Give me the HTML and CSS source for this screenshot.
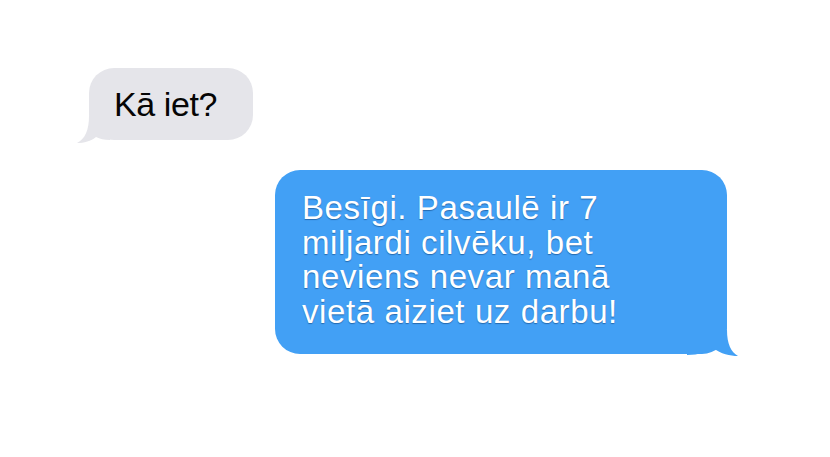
FILE: index.html
```html
<!DOCTYPE html>
<html lang="lv">
<head>
    <meta charset="UTF-8">
    <meta name="viewport" content="width=device-width, initial-scale=1.0">
    <title>Sarakste</title>
    <link rel="stylesheet" href="styles.css">
</head>
<body>
    <!-- sarakste -->
    <div class="chat">
        <!-- ienākošā ziņa -->
        <div class="bubble in">
            Kā iet?
            <svg class="tail tail-in" width="40" height="40" viewBox="0 0 40 40">
                <path d="M19 6 C19 20 15 29 7 33 C14 33 21 31 26 27 C30 29 34 30 40 30 L40 6 Z" fill="#e5e5ea"/>
            </svg>
        </div>

        <!-- izejošā ziņa -->
        <div class="bubble out">
            Besīgi. Pasaulē ir 7<br>
            miljardi cilvēku, bet<br>
            neviens nevar manā<br>
            vietā aiziet uz darbu!
            <svg class="tail tail-out" width="70" height="40" viewBox="0 0 70 40">
                <path d="M12 34 L12 10 L52 10 C52 24 56 32 63 36 C55 36 46 34 38 28 C32 32 24 35 12 35 Z" fill="#42a0f5"/>
            </svg>
        </div>
    </div>
</body>
</html>
```

FILE: styles.css
```css
*{
    margin: 0;
    padding: 0;
    box-sizing: border-box;
}
body{
    background: #fff;
    font-family: "Liberation Sans", Arial, sans-serif;
}
.chat{
    width: 830px;
    height: 457px;
    display: flex;
    flex-direction: column;
    align-items: flex-start;
    padding-top: 68px;
}
.bubble{
    /* tail ir absolūts pret burbuli */
    position: relative;
    border-radius: 25px;
    white-space: nowrap;
}
.bubble.in{
    margin-left: 89px;
    width: 164px;
    height: 72px;
    padding: 16px 0 0 25px;
    background: #e5e5ea;
    color: #050505;
    font-size: 34px;
    line-height: 40px;
    letter-spacing: -0.4px;
}
.bubble.out{
    margin-left: 275px;
    margin-top: 30px;
    width: 452px;
    height: 184px;
    padding: 21px 0 0 27px;
    background: #42a0f5;
    color: #fff;
    font-size: 33px;
    line-height: 34.5px;
    letter-spacing: 0.6px;
    text-shadow: 0 1px 1px rgba(0, 40, 90, 0.45);
}
.tail{
    position: absolute;
    display: block;
}
.tail-in{
    left: -19px;
    top: 42px;
}
.tail-out{
    left: 400px;
    top: 150px;
}
```
